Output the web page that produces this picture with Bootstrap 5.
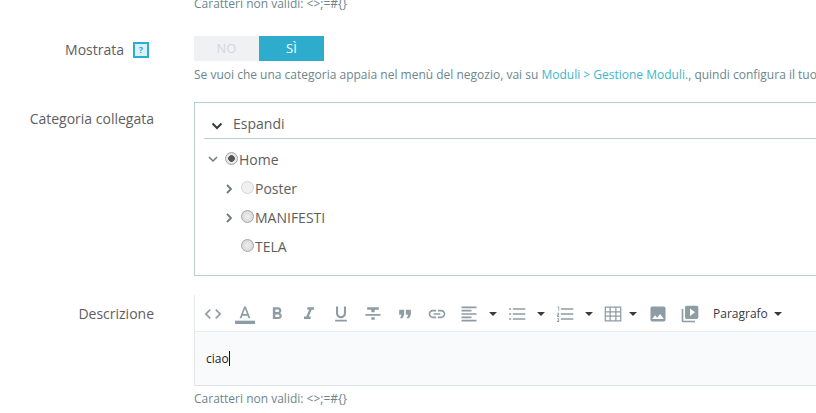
<!DOCTYPE html>
<html lang="it">
<head>
    <meta charset="UTF-8">
    <meta name="viewport" content="width=device-width, initial-scale=1">
    <title>Categoria</title>
    <link href="https://cdn.jsdelivr.net/npm/bootstrap@5.3.0/dist/css/bootstrap.min.css" rel="stylesheet">
    <style>
        html, body { height: 413px; overflow: hidden; }
        body { font-family: "Open Sans", "Liberation Sans", sans-serif; font-size: 13px; color: #363a41; background: #fff; }
        .page-form { width: 1100px; margin-top: -6px; padding-top: 1px; }
        .form-line { display: flex; }
        .first-line { padding-left: 194px; }
        .line-gap-a { margin-top: 23px; }
        .line-gap-b { margin-top: 18px; }
        .line-gap-c { margin-top: 19px; }
        .line-label { width: 154px; margin-right: 40px; text-align: right; color: #5e5e5e; font-size: 14px; line-height: 20px; flex: none; }
        .label-hint { display: flex; justify-content: flex-end; align-items: center; height: 25px; padding: 2px 5px 0 0; }
        .label-tree { padding-top: 7px; }
        .label-desc { padding-top: 9px; }
        .line-body { flex: 1 1 auto; min-width: 0; }
        .help-text { color: #6c868e; font-size: 12px; line-height: 18px; white-space: nowrap; }
        .help-gap { margin-top: 5px; }
        .help-text a { color: #3fb5cc; text-decoration: none; }
        .hint-box { display: inline-block; width: 16px; height: 16px; margin-left: 9px; border: 2px solid #2eacce; background: #d9f1f7; color: #2eacce; font-size: 9px; font-weight: 700; line-height: 12px; text-align: center; }
        .yes-no { display: flex; width: 130px; height: 25px; font-weight: 500; font-size: 13px; line-height: 25px; text-align: center; }
        .yes-no span { width: 65px; }
        .yes-no .opt-no { background: #eff1f2; color: #d3d7da; }
        .yes-no .opt-si { background: #2eacce; color: #fff; }
        .tree-box { height: 174px; border: 1px solid #bbcdd2; padding: 0 9px; }
        .tree-head { height: 36px; border-bottom: 1px solid #bbcdd2; padding-left: 7px; font-size: 14px; color: #5e5e5e; line-height: 42px; }
        .tree-head svg { margin-right: 10px; vertical-align: -1px; }
        .tree-rows { margin: 6px 0 0; padding: 0; list-style: none; font-size: 14px; color: #5e5e5e; }
        .tree-rows li { display: flex; align-items: center; height: 29px; }
        .tree-rows .arrow-slot { width: 21px; flex: none; display: flex; padding-left: 4px; color: #555; }
        .tree-rows .sub { padding-left: 16px; }
        .tree-rows .sub .arrow-slot { padding-left: 6px; }
        .tree-rows input { appearance: none; width: 13px; height: 13px; margin: -3px 1px 0 0; border: 1px solid #a6a6a6; border-radius: 50%; background: radial-gradient(circle at 50% 50%, #eee, #d2d2d2); flex: none; }
        .tree-rows input:checked { background: radial-gradient(circle, #555 0 3px, #e6e6e6 3.6px); }
        .tree-rows input:disabled { border-color: #d4d4d4; background: #f0f0f0; }
        .editor-box { height: 91px; border-left: 1px solid #e6e8ea; border-bottom: 1px solid #dfe3e6; }
        .editor-tools { display: flex; align-items: center; height: 37px; padding: 2px 0 0 2px; border-bottom: 1px solid #e9ecef; color: #8e9ca3; }
        .tool-btn { display: flex; align-items: center; justify-content: center; width: 32px; flex: none; }
        .tool-btn svg { width: 20px; height: 20px; fill: currentColor; }
        .tool-caret { display: flex; justify-content: center; width: 16px; flex: none; }
        .tool-caret-short { width: 13px; justify-content: flex-start; }
        .tool-caret::after { content: ""; border-top: 4px solid #363a41; border-left: 4px solid transparent; border-right: 4px solid transparent; }
        .tool-style { display: flex; align-items: center; gap: 6px; margin-left: 7px; font-size: 12px; color: #363a41; }
        .tool-style::after { content: ""; border-top: 4px solid #363a41; border-left: 4px solid transparent; border-right: 4px solid transparent; }
        .editor-text { height: 53px; padding: 18px 11px 0; background: #f9fafb; color: #222; font-size: 12px; line-height: 18px; }
        .caret-bar { display: inline-block; width: 1px; height: 15px; background: #111; vertical-align: -3px; }
    </style>
</head>
<body>
    <form class="page-form">
        <div class="form-line first-line">
            <div class="help-text">Caratteri non validi: &lt;&gt;;=#{}</div>
        </div>

        <div class="form-line line-gap-a">
            <div class="line-label label-hint">Mostrata<span class="hint-box">?</span></div>
            <div class="line-body">
                <div class="yes-no"><span class="opt-no">NO</span><span class="opt-si">SÌ</span></div>
                <div class="help-text help-gap">Se vuoi che una categoria appaia nel menù del negozio, vai su <a href="#">Moduli &gt; Gestione Moduli.</a>, quindi configura il tuo modulo di menù.</div>
            </div>
        </div>

        <div class="form-line line-gap-b">
            <div class="line-label label-tree">Categoria collegata</div>
            <div class="line-body">
                <div class="tree-box">
                    <div class="tree-head">
                        <svg width="12" height="8" viewBox="0 0 12 8"><path d="M1.500 1.500 6 6l4.500-4.500" fill="none" stroke="#363a41" stroke-width="2"/></svg>Espandi
                    </div>
                    <ul class="tree-rows">
                        <li><span class="arrow-slot"><svg width="10" height="7" viewBox="0 0 10 7"><path d="M1 1l4 4 4-4" fill="none" stroke="#6c7a80" stroke-width="1.500"/></svg></span><input type="radio" name="cat" checked><span>Home</span></li>
                        <li class="sub"><span class="arrow-slot"><svg width="7" height="10" viewBox="0 0 7 10"><path d="M1 1l4 4-4 4" fill="none" stroke="#6c7a80" stroke-width="1.800"/></svg></span><input type="radio" name="cat" disabled><span>Poster</span></li>
                        <li class="sub"><span class="arrow-slot"><svg width="7" height="10" viewBox="0 0 7 10"><path d="M1 1l4 4-4 4" fill="none" stroke="#6c7a80" stroke-width="1.800"/></svg></span><input type="radio" name="cat"><span>MANIFESTI</span></li>
                        <li class="sub"><span class="arrow-slot"></span><input type="radio" name="cat"><span>TELA</span></li>
                    </ul>
                </div>
            </div>
        </div>

        <div class="form-line line-gap-c">
            <div class="line-label label-desc">Descrizione</div>
            <div class="line-body">
                <div class="editor-box">
                    <div class="editor-tools">
                        <span class="tool-btn"><svg viewBox="0 0 24 24"><path d="M9.400 16.600 4.800 12l4.600-4.600L8 6l-6 6 6 6 1.400-1.400zm5.200 0 4.600-4.600-4.600-4.600L16 6l6 6-6 6-1.400-1.400z"/></svg></span>
                        <span class="tool-btn"><svg viewBox="0 0 24 24"><path d="M11 3 5.500 17h2.250l1.120-3h6.250l1.120 3h2.250L13 3h-2zm-1.380 9L12 5.670 14.380 12H9.620z"/><path d="M0 20h24v4H0z"/></svg></span>
                        <span class="tool-btn"><svg viewBox="0 0 24 24"><path d="M15.600 10.790c.97-.67 1.650-1.770 1.650-2.790 0-2.260-1.750-4-4-4H7v14h7.040c2.090 0 3.710-1.700 3.710-3.790 0-1.520-.86-2.820-2.150-3.420zM10 6.500h3c.83 0 1.500.67 1.500 1.500s-.67 1.500-1.500 1.500h-3v-3zm3.500 9H10v-3h3.500c.83 0 1.500.67 1.500 1.500s-.67 1.500-1.500 1.500z"/></svg></span>
                        <span class="tool-btn"><svg viewBox="0 0 24 24"><path d="M10 4v3h2.210l-3.420 8H6v3h8v-3h-2.210l3.420-8H18V4z"/></svg></span>
                        <span class="tool-btn"><svg viewBox="0 0 24 24"><path d="M12 17c3.310 0 6-2.690 6-6V3h-2.500v8c0 1.930-1.570 3.500-3.500 3.500S8.500 12.930 8.500 11V3H6v8c0 3.310 2.690 6 6 6zm-7 2v2h14v-2H5z"/></svg></span>
                        <span class="tool-btn"><svg viewBox="0 0 24 24"><path d="M10 19h4v-3h-4v3zM5 4v3h5v3h4V7h5V4H5zM3 14h18v-2H3v2z"/></svg></span>
                        <span class="tool-btn"><svg viewBox="0 0 24 24"><path d="M6 17h3l2-4V7H5v6h3zm8 0h3l2-4V7h-6v6h3z"/></svg></span>
                        <span class="tool-btn"><svg viewBox="0 0 24 24"><path d="M3.900 12c0-1.710 1.390-3.100 3.100-3.100h4V7H7c-2.760 0-5 2.240-5 5s2.240 5 5 5h4v-1.900H7c-1.710 0-3.100-1.390-3.100-3.100zM8 13h8v-2H8v2zm9-6h-4v1.900h4c1.710 0 3.100 1.390 3.100 3.100s-1.390 3.100-3.100 3.100h-4V17h4c2.760 0 5-2.240 5-5s-2.240-5-5-5z"/></svg></span>
                        <span class="tool-btn"><svg viewBox="0 0 24 24"><path d="M15 15H3v2h12v-2zm0-8H3v2h12V7zM3 13h18v-2H3v2zm0 8h18v-2H3v2zM3 3v2h18V3H3z"/></svg></span>
                        <span class="tool-caret"></span>
                        <span class="tool-btn"><svg viewBox="0 0 24 24"><path d="M7 5h15v2H7zM7 11h15v2H7zM7 17h15v2H7zM2.500 5H5v2H2.500zM2.500 11H5v2H2.500zM2.500 17H5v2H2.500z"/></svg></span>
                        <span class="tool-caret"></span>
                        <span class="tool-btn"><svg viewBox="0 0 24 24"><path d="M7 5h15v2H7zM7 11h15v2H7zM7 17h15v2H7zM3 3h2v5H4V4H3zM2.500 10.500H5v3.200H3.500v.8H5v1H2.500v-3h1.500v-1H2.500zM2.500 17H5v4.500H2.500v-1H4v-.8H3v-.8h1v-.9H2.500z"/></svg></span>
                        <span class="tool-caret"></span>
                        <span class="tool-btn"><svg viewBox="0 0 24 24"><path d="M2 3v18h20V3H2zm1.500 1.500h4.300v4.300H3.500V4.500zm5.800 0h5.400v4.300H9.300V4.500zm6.900 0h4.300v4.300h-4.300V4.500zM3.500 10.300h4.300v3.400H3.500v-3.400zm5.800 0h5.400v3.400H9.300v-3.400zm6.900 0h4.300v3.400h-4.300v-3.400zM3.500 15.200h4.300v4.300H3.500v-4.300zm5.800 0h5.400v4.300H9.300v-4.300zm6.900 0h4.300v4.300h-4.300v-4.300z"/></svg></span>
                        <span class="tool-caret tool-caret-short"></span>
                        <span class="tool-btn"><svg viewBox="0 0 24 24"><path d="M21 19V5c0-1.100-.9-2-2-2H5c-1.100 0-2 .9-2 2v14c0 1.100.9 2 2 2h14c1.100 0 2-.9 2-2zM8.500 13.500l2.500 3.010L14.500 12l4.500 6H5l3.500-4.500z"/></svg></span>
                        <span class="tool-btn"><svg viewBox="0 0 24 24"><path d="M4 6H2v14c0 1.100.9 2 2 2h14v-2H4V6zm16-4H8c-1.100 0-2 .9-2 2v12c0 1.100.9 2 2 2h12c1.100 0 2-.9 2-2V4c0-1.100-.9-2-2-2zm-8 12.500v-9l6 4.500-6 4.500z"/></svg></span>
                        <span class="tool-style">Paragrafo</span>
                    </div>
                    <div class="editor-text">ciao<span class="caret-bar"></span></div>
                </div>
                <div class="help-text mt-1">Caratteri non validi: &lt;&gt;;=#{}</div>
            </div>
        </div>
    </form>
    <script src="https://cdn.jsdelivr.net/npm/bootstrap@5.3.0/dist/js/bootstrap.bundle.min.js"></script>
</body>
</html>
